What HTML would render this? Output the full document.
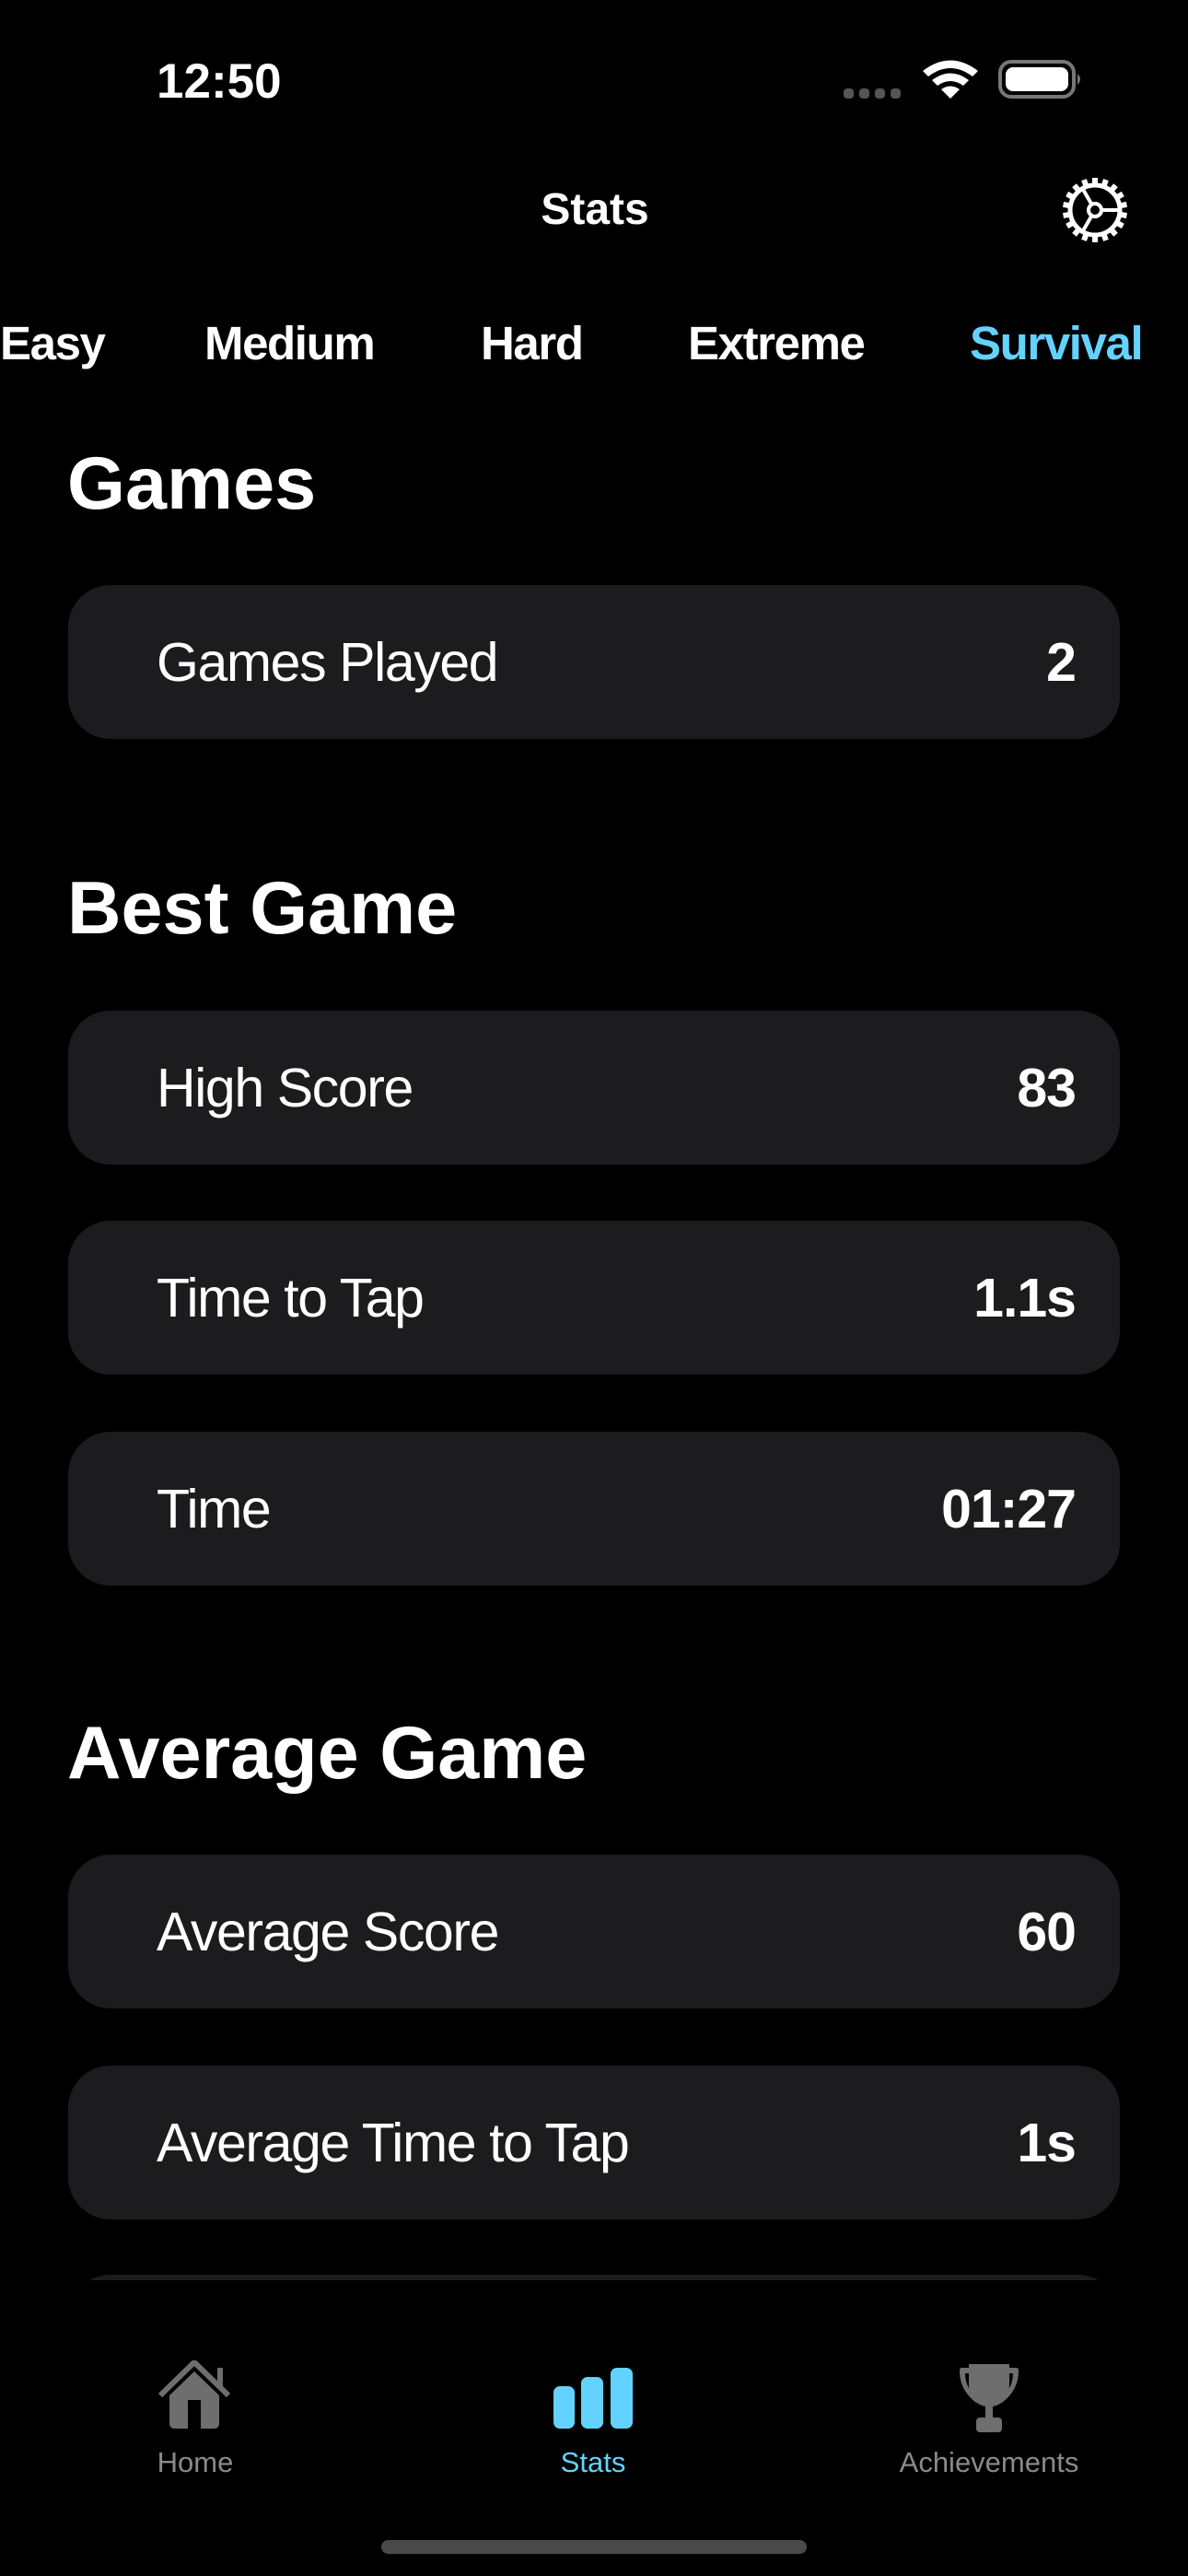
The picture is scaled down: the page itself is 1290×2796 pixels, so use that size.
<!DOCTYPE html>
<html><head><meta charset="utf-8"><style>
*{margin:0;padding:0;box-sizing:border-box}
html,body{width:1290px;height:2796px;background:#000;overflow:hidden;font-family:"Liberation Sans",sans-serif;color:#fff}
.a{position:absolute;line-height:1;white-space:nowrap}
.card{position:absolute;left:74px;width:1142px;height:167px;background:#1c1c1e;border-radius:46px}
.card .l{position:absolute;left:96px;top:55px;font-size:59px;line-height:1;letter-spacing:-1.4px}
.card .v{position:absolute;right:48px;top:55px;font-size:59px;line-height:1;font-weight:bold;letter-spacing:-1px}
.h{font-size:81px;font-weight:bold;left:73px}
.tab{font-size:51px;font-weight:bold;top:347px;letter-spacing:-1.4px}
.tl{font-size:31px;top:2657px;color:#8a8a8a;transform:translateX(-50%)}
</style></head><body>
<div class="a" style="left:170px;top:62px;font-size:53px;font-weight:bold">12:50</div>
<svg class="a" style="left:914px;top:60px" width="270" height="52" viewBox="0 0 270 52">
 <g fill="#555"><rect x="2" y="36" width="11" height="11" rx="4"/><rect x="19" y="36" width="11" height="11" rx="4"/><rect x="36" y="36" width="11" height="11" rx="4"/><rect x="53" y="36" width="11" height="11" rx="4"/></g>
 <g fill="#fff"><path d="M88 17 Q118 -6 148 17 L142 23 Q118 5 94 23Z"/><path d="M98 27 Q118 12 138 27 L132 33 Q118 23 104 33Z"/><path d="M108 37 Q118 30 128 37 L118 47Z"/></g>
 <rect x="172" y="7" width="80" height="38" rx="12" fill="none" stroke="#777" stroke-width="4"/>
 <rect x="178" y="13" width="68" height="26" rx="8" fill="#fff"/>
 <path d="M256 20 Q262 26 256 32Z" fill="#777"/>
</svg>
<div class="a" style="left:646px;top:204px;font-size:48px;font-weight:bold;transform:translateX(-50%)">Stats</div>
<svg class="a" style="left:1153px;top:192px" width="72" height="72" viewBox="-36 -36 72 72">
 <g fill="#fff">
  <rect x="-3" y="-35" width="6" height="8" transform="rotate(0)"/><rect x="-3" y="-35" width="6" height="8" transform="rotate(20)"/><rect x="-3" y="-35" width="6" height="8" transform="rotate(40)"/><rect x="-3" y="-35" width="6" height="8" transform="rotate(60)"/><rect x="-3" y="-35" width="6" height="8" transform="rotate(80)"/><rect x="-3" y="-35" width="6" height="8" transform="rotate(100)"/><rect x="-3" y="-35" width="6" height="8" transform="rotate(120)"/><rect x="-3" y="-35" width="6" height="8" transform="rotate(140)"/><rect x="-3" y="-35" width="6" height="8" transform="rotate(160)"/><rect x="-3" y="-35" width="6" height="8" transform="rotate(180)"/><rect x="-3" y="-35" width="6" height="8" transform="rotate(200)"/><rect x="-3" y="-35" width="6" height="8" transform="rotate(220)"/><rect x="-3" y="-35" width="6" height="8" transform="rotate(240)"/><rect x="-3" y="-35" width="6" height="8" transform="rotate(260)"/><rect x="-3" y="-35" width="6" height="8" transform="rotate(280)"/><rect x="-3" y="-35" width="6" height="8" transform="rotate(300)"/><rect x="-3" y="-35" width="6" height="8" transform="rotate(320)"/><rect x="-3" y="-35" width="6" height="8" transform="rotate(340)"/>
 </g>
 <circle r="27" fill="none" stroke="#fff" stroke-width="5"/>
 <circle r="7" fill="none" stroke="#fff" stroke-width="4"/>
 <g stroke="#fff" stroke-width="4"><line x1="7" y1="0" x2="27" y2="0"/><line x1="-3.5" y1="-6" x2="-13.5" y2="-23.4"/><line x1="-3.5" y1="6" x2="-13.5" y2="23.4"/></g>
</svg>
<div class="a tab" style="left:0">Easy</div>
<div class="a tab" style="left:222px">Medium</div>
<div class="a tab" style="left:522px">Hard</div>
<div class="a tab" style="left:747px">Extreme</div>
<div class="a tab" style="left:1053px;color:#64d2ff">Survival</div>

<div class="a h" style="top:485px">Games</div>
<div class="card" style="top:635px"><div class="l">Games Played</div><div class="v">2</div></div>

<div class="a h" style="top:946px">Best Game</div>
<div class="card" style="top:1097px"><div class="l">High Score</div><div class="v">83</div></div>
<div class="card" style="top:1325px"><div class="l">Time to Tap</div><div class="v">1.1s</div></div>
<div class="card" style="top:1554px"><div class="l">Time</div><div class="v">01:27</div></div>

<div class="a h" style="top:1863px">Average Game</div>
<div class="card" style="top:2013px"><div class="l">Average Score</div><div class="v">60</div></div>
<div class="card" style="top:2242px"><div class="l">Average Time to Tap</div><div class="v">1s</div></div>
<div style="position:absolute;left:0;top:2469px;width:1290px;height:6px;overflow:hidden"><div class="card" style="top:0"></div></div>

<svg class="a" style="left:170px;top:2562px" width="86" height="76" viewBox="0 0 86 76">
 <path d="M4 38 L41 2 L78 38" fill="none" stroke="#6e6e6e" stroke-width="6"/>
 <rect x="66" y="8" width="6" height="20" fill="#6e6e6e"/>
 <path d="M14 38 L41 12 L68 38 L68 68 Q68 74 62 74 L20 74 Q14 74 14 68Z" fill="#6e6e6e"/>
 <rect x="34" y="43" width="14" height="31" fill="#000"/>
</svg>
<svg class="a" style="left:601px;top:2570px" width="86" height="66" viewBox="0 0 86 66">
 <g fill="#64d2ff"><rect x="0" y="20" width="23" height="46" rx="7"/><rect x="30" y="10" width="24" height="56" rx="7"/><rect x="62" y="0" width="24" height="66" rx="7"/></g>
</svg>
<svg class="a" style="left:1040px;top:2564px" width="68" height="76" viewBox="0 0 68 76">
 <g fill="#6e6e6e">
  <path d="M12 2 L56 2 L56 24 Q56 44 38 48 L30 48 Q12 44 12 24Z"/>
  <path d="M12 6 L4 6 Q2 6 2 10 Q2 30 20 44 L22 40 Q8 28 8 12 L12 12Z"/>
  <path d="M56 6 L64 6 Q66 6 66 10 Q66 30 48 44 L46 40 Q60 28 60 12 L56 12Z"/>
  <rect x="30" y="46" width="8" height="16"/>
  <rect x="20" y="60" width="28" height="16" rx="4"/>
 </g>
</svg>
<div class="a tl" style="left:212px">Home</div>
<div class="a tl" style="left:644px;color:#64d2ff">Stats</div>
<div class="a tl" style="left:1074px">Achievements</div>
<div style="position:absolute;left:414px;top:2757px;width:462px;height:15px;border-radius:8px;background:#4a4a4a"></div>
</body></html>
